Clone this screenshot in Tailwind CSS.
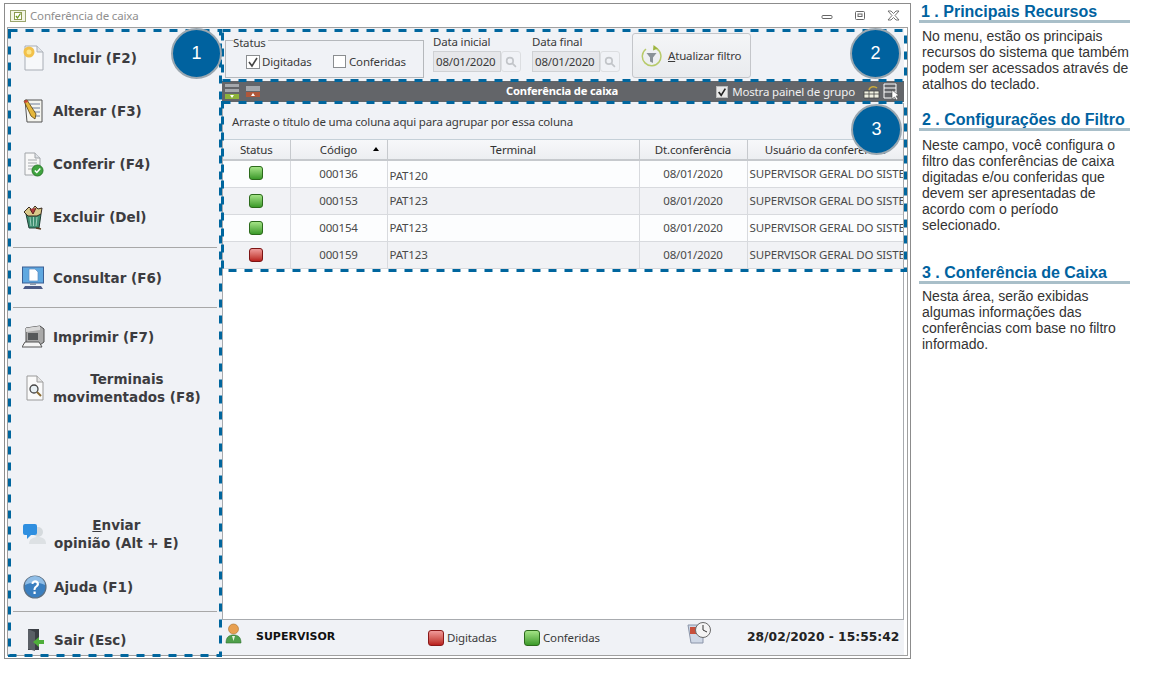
<!DOCTYPE html>
<html lang="pt-BR">
<head>
    <meta charset="UTF-8">
    <meta name="viewport" content="width=device-width, initial-scale=1.0">
    <title>Conferência de caixa</title>
    <script src="https://cdn.jsdelivr.net/npm/@tailwindcss/browser@4"></script>
</head>
<body class="bg-white">
<div class="relative w-[1155px] h-[679px] overflow-hidden flex font-['Noto_Sans',sans-serif]">

    <!-- Window -->
    <div class="ml-[4px] mt-[3px] w-[907px] h-[656px] border border-[#8c8c8c] bg-white flex flex-col shrink-0">
        <!-- Title bar -->
        <div class="h-[23px] flex items-center pl-[5px] shrink-0 text-[11.5px] tracking-[-0.17px] text-[#8f8f8f]">
            <svg class="w-[16px] h-[13px] mr-[4px]" viewBox="0 0 16 13"><rect x=".5" y="1.5" width="15" height="11" fill="#f3f6e6" stroke="#9aa56e"/><rect x="4.5" y="3.5" width="7" height="7" fill="#fff" stroke="#8c9a4e"/><path d="M6 7l1.500 2 3-4.500" fill="none" stroke="#6d9a22" stroke-width="1.300"/></svg>
            <span>Conferência de caixa</span>
            <div class="ml-auto flex items-center gap-[20px] mr-[10px]">
                <svg class="w-[13px] h-[11px]" viewBox="0 0 13 11"><rect x="1" y="5.500" width="10" height="3" rx="1" fill="#fff" stroke="#666"/></svg>
                <svg class="w-[13px] h-[11px]" viewBox="0 0 13 11"><rect x="1.500" y="1.500" width="9" height="8" rx="1" fill="#fff" stroke="#666"/><rect x="4" y="4" width="4" height="2.500" fill="none" stroke="#666"/></svg>
                <svg class="w-[13px] h-[11px]" viewBox="0 0 13 11"><path d="M1 1h3l2.500 2.500L9 1h3L8 5.500l4 4.500H9L6.500 7.500 4 10H1l4-4.500z" fill="#fff" stroke="#666" stroke-width=".9"/></svg>
            </div>
        </div>

        <!-- Body -->
        <div class="flex-1 flex min-h-0 border border-[#a0a0a0] ml-[2px] mr-[2px] mb-[2px]">
            <!-- Sidebar -->
            <aside class="w-[214px] bg-[#f0f2f6] flex flex-col shrink-0 pl-[14px] pr-[3px] text-[#3c3c40] font-['DejaVu_Sans',sans-serif] font-bold text-[13.5px] leading-[18px]">
                <div class="h-[53px] mt-[3px] flex items-center gap-[9px]">
                    <svg class="w-[22px] h-[26px] shrink-0" viewBox="0 0 22 26"><path d="M3 1h12l6 6v18H3z" fill="#f7f8fa" stroke="#a8adb5"/><path d="M15 1v6h6" fill="#e2e5ea" stroke="#a8adb5"/><circle cx="7" cy="7" r="5.500" fill="#f2c14a"/><circle cx="7" cy="7" r="2.500" fill="#fde58c"/></svg>
                    <span>Incluir (F2)</span>
                </div>
                <div class="h-[53px] flex items-center gap-[9px]">
                    <svg class="w-[22px] h-[26px] shrink-0" viewBox="0 0 22 26"><path d="M3 2h17v22H5z" fill="#f5f5ef" stroke="#555"/><path d="M8 6h10M9 10h9M10 14h8M11 18h7" stroke="#6f7f9a"/><path d="M2 3l3-1 9 14-1 5-4-3z" fill="#e5b73b" stroke="#5b4310" stroke-width=".8"/><path d="M2 3l3-1 1 2-3 1z" fill="#c8443c"/></svg>
                    <span>Alterar (F3)</span>
                </div>
                <div class="h-[53px] flex items-center gap-[9px]">
                    <svg class="w-[22px] h-[26px] shrink-0" viewBox="0 0 22 26"><path d="M3 2h10l5 5v17H3z" fill="#f8f8f8" stroke="#a0a4a8"/><path d="M13 2v5h5" fill="#dfe2e6" stroke="#a0a4a8"/><path d="M6 9h9M6 12h9M6 15h7M6 18h5" stroke="#a5a9ad"/><circle cx="15.500" cy="19.500" r="5.500" fill="#3fa33f" stroke="#2a7a2a"/><path d="M12.800 19.500l2 2 3.500-4" fill="none" stroke="#fff" stroke-width="1.500"/></svg>
                    <span>Conferir (F4)</span>
                </div>
                <div class="h-[53px] flex items-center gap-[9px]">
                    <svg class="w-[22px] h-[26px] shrink-0" viewBox="0 0 22 26"><path d="M4 10h15l-2 14H7z" fill="#3f8f72" stroke="#1f3f35"/><path d="M2 8l5-5 3 3 3-4 3 3 4-1-1 6-4 2H6z" fill="#d9c98a" stroke="#3a2b20"/><path d="M8 5l3 5 3-6" fill="#b03a3a" stroke="#5a1d1d"/><path d="M8 13l1 9M11.500 13v9M15 13l-1 9" stroke="#9fd0bb"/><path d="M14 24l5 1" stroke="#5b3a20" stroke-width="1.500"/></svg>
                    <span>Excluir (Del)</span>
                </div>
                <div class="mt-[4px] border-t border-[#a8a8a8] -ml-[9px] mr-[2px] h-[60px] pt-[1px] flex items-center gap-[9px] pl-[9px]">
                    <svg class="w-[22px] h-[24px] shrink-0" viewBox="0 0 22 24"><rect x="0.500" y="1" width="21" height="16" fill="#5fa8e0" stroke="#3a5f94"/><path d="M7 3h6l3 3v9H7z" fill="#fff" stroke="#5f8cc0" stroke-width=".7"/><path d="M8 17h6v2H8z" fill="#8d9aae"/><path d="M3 20h16l2 3H1z" fill="#4b5a86"/></svg>
                    <span>Consultar (F6)</span>
                </div>
                <div class="border-t border-[#a8a8a8] -ml-[9px] mr-[2px] h-[59px] flex items-center gap-[8px] pl-[9px]">
                    <svg class="w-[23px] h-[24px] shrink-0" viewBox="0 0 23 24"><path d="M4 3l14-2 4 3v13l-4 3H4z" fill="#a9a9a9" stroke="#4a4a4a"/><path d="M4 3l14-2v4L4 7z" fill="#d8d8d8"/><rect x="6" y="8" width="10" height="7" fill="#55585a"/><path d="M3 17h14l3 5H0z" fill="#f5f5f5" stroke="#555"/></svg>
                    <span>Imprimir (F7)</span>
                </div>
                <div class="h-[44px] flex items-center gap-[9px] pl-[4px]">
                    <svg class="w-[18px] h-[26px] shrink-0" viewBox="0 0 18 26"><path d="M1 1h10l6 6v18H1z" fill="#fafafa" stroke="#9a9a9a"/><path d="M11 1v6h6" fill="#e5e5e5" stroke="#9a9a9a"/><circle cx="8" cy="14" r="4" fill="#e8f0f4" stroke="#444" stroke-width="1.300"/><path d="M11 17l4 4" stroke="#8a6a30" stroke-width="2"/></svg>
                    <span class="text-center">Terminais<br>movimentados (F8)</span>
                </div>
                <div class="flex-1"></div>
                <div class="h-[42px] flex items-center gap-[8px] pl-[1px]">
                    <svg class="w-[23px] h-[22px] shrink-0" viewBox="0 0 23 22"><circle cx="15" cy="9" r="5" fill="#d5dadd"/><path d="M6 21c0-5 4-7 9-7s8 2 8 7z" fill="#dde1e4"/><path d="M2 1h10a2 2 0 0 1 2 2v7a2 2 0 0 1-2 2H8l-4 4v-4H2a2 2 0 0 1-2-2V3a2 2 0 0 1 2-2z" fill="#2f8fe0"/></svg>
                    <span class="text-center">
                        <u class="underline">E</u>nviar<br>opinião (Alt + E)
                    </span>
                </div>
                <div class="h-[46px] mt-[10px] pb-[2px] flex items-center gap-[7px] pl-[1px]">
                    <svg class="w-[24px] h-[24px] shrink-0" viewBox="0 0 24 24"><circle cx="12" cy="12" r="11" fill="#3a7fc0" stroke="#5d6f80" stroke-width="1.200"/><path d="M2 10a10 9 0 0 1 20 0c-6-3-14-3-20 0z" fill="#8fbde6"/><path d="M8.500 9c0-5 7.500-5 7.500 0 0 3-3.500 3-3.500 6h-2c0-4 3.200-4 3.200-6 0-2-3.200-2-3.200 0z" fill="#fff"/><rect x="10.500" y="16.500" width="2.200" height="2.500" fill="#fff"/></svg>
                    <span>Ajuda (F1)</span>
                </div>
                <div class="border-t border-[#a8a8a8] -ml-[9px] mr-[2px] flex-none h-[44px] pt-[13px] flex items-center gap-[9px] pl-[14px]">
                    <svg class="w-[18px] h-[24px] shrink-0" viewBox="0 0 18 24"><path d="M1 1h11v21H1z" fill="#3a3e44"/><path d="M1 1l7 3v19l-7-2z" fill="#5a5f66"/><path d="M17 12h-5V9l-6 5 6 5v-3h5z" fill="#4fae3a"/></svg>
                    <span>Sair (Esc)</span>
                </div>
            </aside>

            <!-- Main -->
            <main class="flex-1 min-w-0 mr-[3px] flex flex-col text-[#3a3a3a] text-[11.5px] tracking-[-0.17px] bg-[#f0f2f6]">
                <!-- Filter -->
                <div class="h-[53px] flex shrink-0 pl-[3px] pt-[5px]">
                    <div class="relative w-[199px] h-[38px] mt-[7px] border border-[#b5b8bc] pl-[20px] pt-[12px]">
                        <span class="absolute left-[7px] -top-[10px] pr-[2px] pt-[5px] leading-[14px] bg-[#f0f2f6]">Status</span>
                        <div class="flex items-center">
                            <span class="w-[14px] h-[14px] border border-[#8a8d90] bg-white flex items-center justify-center">
                                <svg class="w-[12px] h-[12px]" viewBox="0 0 12 12"><path d="M2 6l3 4 5-8" fill="none" stroke="#444" stroke-width="1.600"/></svg>
                            </span>
                            <span class="ml-[2px] w-[71px]">Digitadas</span>
                            <span class="w-[13px] h-[13px] border border-[#8a8d90] bg-white"></span>
                            <span class="ml-[3px]">Conferidas</span>
                        </div>
                    </div>
                    <div class="ml-[9px] w-[99px] pt-[2px]">
                        <div class="leading-[14px]">Data inicial</div>
                        <div class="flex mt-[2px]">
                            <div class="w-[68px] h-[21px] bg-[#e6e7ea] border border-[#cfd1d4] flex items-center pl-[2px] whitespace-nowrap">08/01/2020</div>
                            <div class="w-[20px] h-[21px] border border-[#dcdee1] rounded-[3px] flex items-center justify-center">
                                <svg class="w-[12px] h-[12px]" viewBox="0 0 11 11"><circle cx="4.500" cy="4.500" r="3" fill="none" stroke="#c2c5c9" stroke-width="1.500"/><path d="M7 7l3 3" stroke="#c2c5c9" stroke-width="1.500"/></svg>
                            </div>
                        </div>
                    </div>
                    <div class="w-[100px] pt-[2px]">
                        <div class="leading-[14px]">Data final</div>
                        <div class="flex mt-[2px]">
                            <div class="w-[68px] h-[21px] bg-[#e6e7ea] border border-[#cfd1d4] flex items-center pl-[2px] whitespace-nowrap">08/01/2020</div>
                            <div class="w-[20px] h-[21px] border border-[#dcdee1] rounded-[3px] flex items-center justify-center">
                                <svg class="w-[12px] h-[12px]" viewBox="0 0 11 11"><circle cx="4.500" cy="4.500" r="3" fill="none" stroke="#c2c5c9" stroke-width="1.500"/><path d="M7 7l3 3" stroke="#c2c5c9" stroke-width="1.500"/></svg>
                            </div>
                        </div>
                    </div>
                    <button class="w-[119px] h-[45px] border border-[#c4c6ca] rounded-[3px] bg-gradient-to-b from-[#f4f5f7] to-[#e9ebee] flex items-center pl-[8px] text-[#3a3a3a]">
                        <svg class="w-[21px] h-[24px] mr-[6px] shrink-0" viewBox="0 0 21 24"><path d="M15.500 4.500A9.300 9.300 0 1 1 5 5" fill="none" stroke="#b7ca6a" stroke-width="1.500"/><path d="M12.500 1l4.500 3.500-5 2z" fill="#9db53f"/><path d="M5.500 9h10l-3.500 4.500V19l-3-1.500v-4z" fill="#8a9298"/></svg>
                        <span><u class="underline">A</u>tualizar filtro</span>
                    </button>
                </div>

                <!-- Grid title bar -->
                <div class="h-[21px] bg-[#636569] flex items-center shrink-0 pl-[2px] text-white relative">
                    <svg class="w-[16px] h-[17px]" viewBox="0 0 16 17"><path d="M1 1h14v3H1zM1 6h14v3H1z" fill="#a5a8ac"/><path d="M1 11h14v5H1z" fill="#8db33a"/><path d="M6 12h4l-2 3z" fill="#fff"/></svg>
                    <svg class="w-[16px] h-[13px] ml-[5px]" viewBox="0 0 16 13"><path d="M1 1h14v5H1z" fill="#a5a8ac"/><path d="M1 7h14v5H1z" fill="#b0573a"/><path d="M6 11h4L8 8z" fill="#fff"/></svg>
                    <span class="absolute left-[284px] font-bold text-[11.2px]">Conferência de caixa</span>
                    <div class="ml-auto flex items-center mr-[4px]">
                        <span class="w-[12px] h-[12px] bg-[#e8e8e8] border border-[#bbb] flex items-center justify-center">
                            <svg class="w-[12px] h-[12px]" viewBox="0 0 12 12"><path d="M2 6l3 4 5-8" fill="none" stroke="#222" stroke-width="2"/></svg>
                        </span>
                        <span class="ml-[4px] mr-[8px] text-[#f0f0f0]">Mostra painel de grupo</span>
                        <svg class="w-[17px] h-[14px] mr-[3px]" viewBox="0 0 17 14"><path d="M1 6h15v7H1zM1 9h15M6 6v7M11 6v7" fill="#f0f0e0" stroke="#444" stroke-width=".8"/><path d="M6 5c1-4 6-4 8-2" fill="none" stroke="#c9a93a" stroke-width="1.500"/></svg>
                        <svg class="w-[17px] h-[17px]" viewBox="0 0 17 17"><path d="M1 1h12v14H1zM1 5h12M1 9h12" fill="none" stroke="#fff"/><path d="M9 7l0 9 2.500-2 2 3 1.500-1-2-3 3-.5z" fill="#fff" stroke="#333" stroke-width=".5"/></svg>
                    </div>
                </div>

                <!-- Grid -->
                <div class="flex-1 min-h-0 bg-white border-l border-r border-b border-[#a8abaf] mt-[1px] flex flex-col">
                    <div class="h-[37px] bg-[#f0f2f6] flex items-center pl-[9px] pt-[1px] shrink-0 border-b border-[#c5d0d8]">Arraste o título de uma coluna aqui para agrupar por essa coluna</div>
                    <table class="w-full table-fixed border-collapse text-[#4a4a4a]">
                        <colgroup>
                            <col class="w-[67px]"><col class="w-[97px]"><col class="w-[252px]"><col class="w-[108px]"><col>
                        </colgroup>
                        <thead>
                            <tr class="h-[20px] bg-gradient-to-b from-[#f7f8fa] to-[#eceef1] text-[#333] font-normal">
                                <th class="font-normal border-r border-b-2 border-[#c6c9cd]">Status</th>
                                <th class="font-normal border-r border-b-2 border-[#c6c9cd]">
                                    <div class="relative">Código<span class="absolute right-[8px] top-[6px] w-0 h-0 border-x-[3px] border-x-transparent border-b-[4px] border-b-black"></span></div>
                                </th>
                                <th class="font-normal border-r border-b-2 border-[#c6c9cd]">Terminal</th>
                                <th class="font-normal border-r border-b-2 border-[#c6c9cd]">Dt.conferência</th>
                                <th class="font-normal border-b-2 border-[#c6c9cd] whitespace-nowrap overflow-hidden">Usuário da conferência</th>
                            </tr>
                        </thead>
                        <tbody>
                            <tr class="h-[27px] bg-[#fcfdfe]">
                                <td class="border-r border-b border-[#d8dade]"><div class="mx-auto w-[14px] h-[14px] rounded-[3px] border border-[#2c6a1c] bg-gradient-to-b from-[#a4e486] to-[#3a9a28] -mt-[2px]"></div></td>
                                <td class="border-r border-b border-[#d8dade] text-center">000136</td>
                                <td class="border-r border-b border-[#d8dade] pl-[2px] pt-[3px]">PAT120</td>
                                <td class="border-r border-b border-[#d8dade] text-center">08/01/2020</td>
                                <td class="border-b border-[#d8dade] whitespace-nowrap overflow-hidden pl-[2px]">SUPERVISOR GERAL DO SISTEMA</td>
                            </tr>
                            <tr class="h-[27px] bg-[#f1f2f5]">
                                <td class="border-r border-b border-[#d8dade]"><div class="mx-auto w-[14px] h-[14px] rounded-[3px] border border-[#2c6a1c] bg-gradient-to-b from-[#a4e486] to-[#3a9a28]"></div></td>
                                <td class="border-r border-b border-[#d8dade] text-center">000153</td>
                                <td class="border-r border-b border-[#d8dade] pl-[2px]">PAT123</td>
                                <td class="border-r border-b border-[#d8dade] text-center">08/01/2020</td>
                                <td class="border-b border-[#d8dade] whitespace-nowrap overflow-hidden pl-[2px]">SUPERVISOR GERAL DO SISTEMA</td>
                            </tr>
                            <tr class="h-[27px] bg-[#fcfdfe]">
                                <td class="border-r border-b border-[#d8dade]"><div class="mx-auto w-[14px] h-[14px] rounded-[3px] border border-[#2c6a1c] bg-gradient-to-b from-[#a4e486] to-[#3a9a28]"></div></td>
                                <td class="border-r border-b border-[#d8dade] text-center">000154</td>
                                <td class="border-r border-b border-[#d8dade] pl-[2px]">PAT123</td>
                                <td class="border-r border-b border-[#d8dade] text-center">08/01/2020</td>
                                <td class="border-b border-[#d8dade] whitespace-nowrap overflow-hidden pl-[2px]">SUPERVISOR GERAL DO SISTEMA</td>
                            </tr>
                            <tr class="h-[27px] bg-[#f1f2f5]">
                                <td class="border-r border-b border-[#d8dade]"><div class="mx-auto w-[14px] h-[14px] rounded-[3px] border border-[#7c1414] bg-gradient-to-b from-[#ee9a9a] to-[#b81c1c]"></div></td>
                                <td class="border-r border-b border-[#d8dade] text-center">000159</td>
                                <td class="border-r border-b border-[#d8dade] pl-[2px]">PAT123</td>
                                <td class="border-r border-b border-[#d8dade] text-center">08/01/2020</td>
                                <td class="border-b border-[#d8dade] whitespace-nowrap overflow-hidden pl-[2px]">SUPERVISOR GERAL DO SISTEMA</td>
                            </tr>
                        </tbody>
                    </table>
                </div>

                <!-- Status bar -->
                <div class="h-[35px] flex items-center shrink-0 relative pl-[3px]">
                    <svg class="w-[17px] h-[21px] -mt-[8px]" viewBox="0 0 17 21"><circle cx="8.500" cy="6" r="5" fill="#e8a050" stroke="#a8702c" stroke-width=".6"/><path d="M1 20c0-6 3-8 7.500-8s7.500 2 7.500 8z" fill="#4fa04a" stroke="#2f7030" stroke-width=".6"/><path d="M7 13h3l-1.500 5z" fill="#e8f0e0"/></svg>
                    <span class="ml-[14px] w-[172px] font-['DejaVu_Sans',sans-serif] font-bold text-[11px] tracking-normal text-[#111]">SUPERVISOR</span>
                    <span class="w-[16px] h-[16px] rounded-[3px] border border-[#8a1818] bg-gradient-to-b from-[#f09a9a] to-[#b81c1c]"></span>
                    <span class="ml-[3px] w-[77px] text-[#3a3a3a]">Digitadas</span>
                    <span class="w-[16px] h-[16px] rounded-[3px] border border-[#2c6a1c] bg-gradient-to-b from-[#a4e486] to-[#3a9a28]"></span>
                    <span class="ml-[3px] text-[#3a3a3a]">Conferidas</span>
                    <svg class="absolute left-[465px] top-[1px] w-[25px] h-[25px]" viewBox="0 0 25 25"><path d="M1 4h15v18H4z" fill="#cfd8e6" stroke="#8a94a8"/><rect x="3" y="6" width="7" height="7" fill="#c8503c"/><circle cx="16" cy="9" r="7.500" fill="#f4f4f4" stroke="#6a6a6a"/><path d="M16 4v5l4 2" fill="none" stroke="#333"/></svg>
                    <span class="absolute left-[525px] top-[9px] font-['DejaVu_Sans',sans-serif] font-bold text-[12.3px] tracking-normal leading-[16px] text-[#222] whitespace-nowrap">28/02/2020 - 15:55:42</span>
                </div>
            </main>
        </div>
    </div>

    <!-- Help text -->
    <div class="ml-[8px] w-[211px] font-['Liberation_Sans',sans-serif] text-[14px] leading-[16px] text-[#333] shrink-0 whitespace-nowrap">
        <h2 class="mt-[2px] pl-[2px] pt-[3px] pb-[1px] text-[16px] leading-[14px] font-bold text-[#00629f] border-b-[3px] border-[#a9bfc9]">1 . Principais Recursos</h2>
        <p class="mt-[5px] pl-[3px]">No menu, estão os principais<br>recursos do sistema que também<br>podem ser acessados através de<br>atalhos do teclado.</p>
        <h2 class="mt-[18px] pl-[3px] pt-[3px] pb-[1px] text-[16px] leading-[14px] font-bold text-[#00629f] border-b-[3px] border-[#a9bfc9]">2 . Configurações do Filtro</h2>
        <p class="mt-[6px] pl-[3px]">Neste campo, você configura o<br>filtro das conferências de caixa<br>digitadas e/ou conferidas que<br>devem ser apresentadas de<br>acordo com o período<br>selecionado.</p>
        <h2 class="mt-[30px] pl-[3px] pt-[3px] pb-[1px] text-[16px] leading-[14px] font-bold text-[#00629f] border-b-[3px] border-[#a9bfc9]">3 . Conferência de Caixa</h2>
        <p class="mt-[4px] pl-[3px]">Nesta área, serão exibidas<br>algumas informações das<br>conferências com base no filtro<br>informado.</p>
    </div>

    <!-- Callout outlines -->
    <svg class="absolute left-0 top-0 pointer-events-none" width="1155" height="679" fill="none" stroke="#00669e" stroke-width="3" stroke-dasharray="8 8">
        <rect x="9.500" y="30.500" width="211" height="625"/>
        <rect x="222.500" y="30.500" width="683" height="50"/>
        <rect x="222.500" y="102.500" width="683" height="168"/>
    </svg>

    <!-- Callout badges -->
    <div class="absolute left-[171px] top-[28px] w-[51px] h-[51px] rounded-full bg-[#00629f] border-2 border-[#9aa7b0] flex items-center justify-center text-white text-[18px] font-['Liberation_Sans',sans-serif]">1</div>
    <div class="absolute left-[850px] top-[28px] w-[51px] h-[51px] rounded-full bg-[#00629f] border-2 border-[#9aa7b0] flex items-center justify-center text-white text-[18px] font-['Liberation_Sans',sans-serif]">2</div>
    <div class="absolute left-[851px] top-[104px] w-[51px] h-[51px] rounded-full bg-[#00629f] border-2 border-[#9aa7b0] flex items-center justify-center text-white text-[18px] font-['Liberation_Sans',sans-serif]">3</div>
</div>
</body>
</html>
